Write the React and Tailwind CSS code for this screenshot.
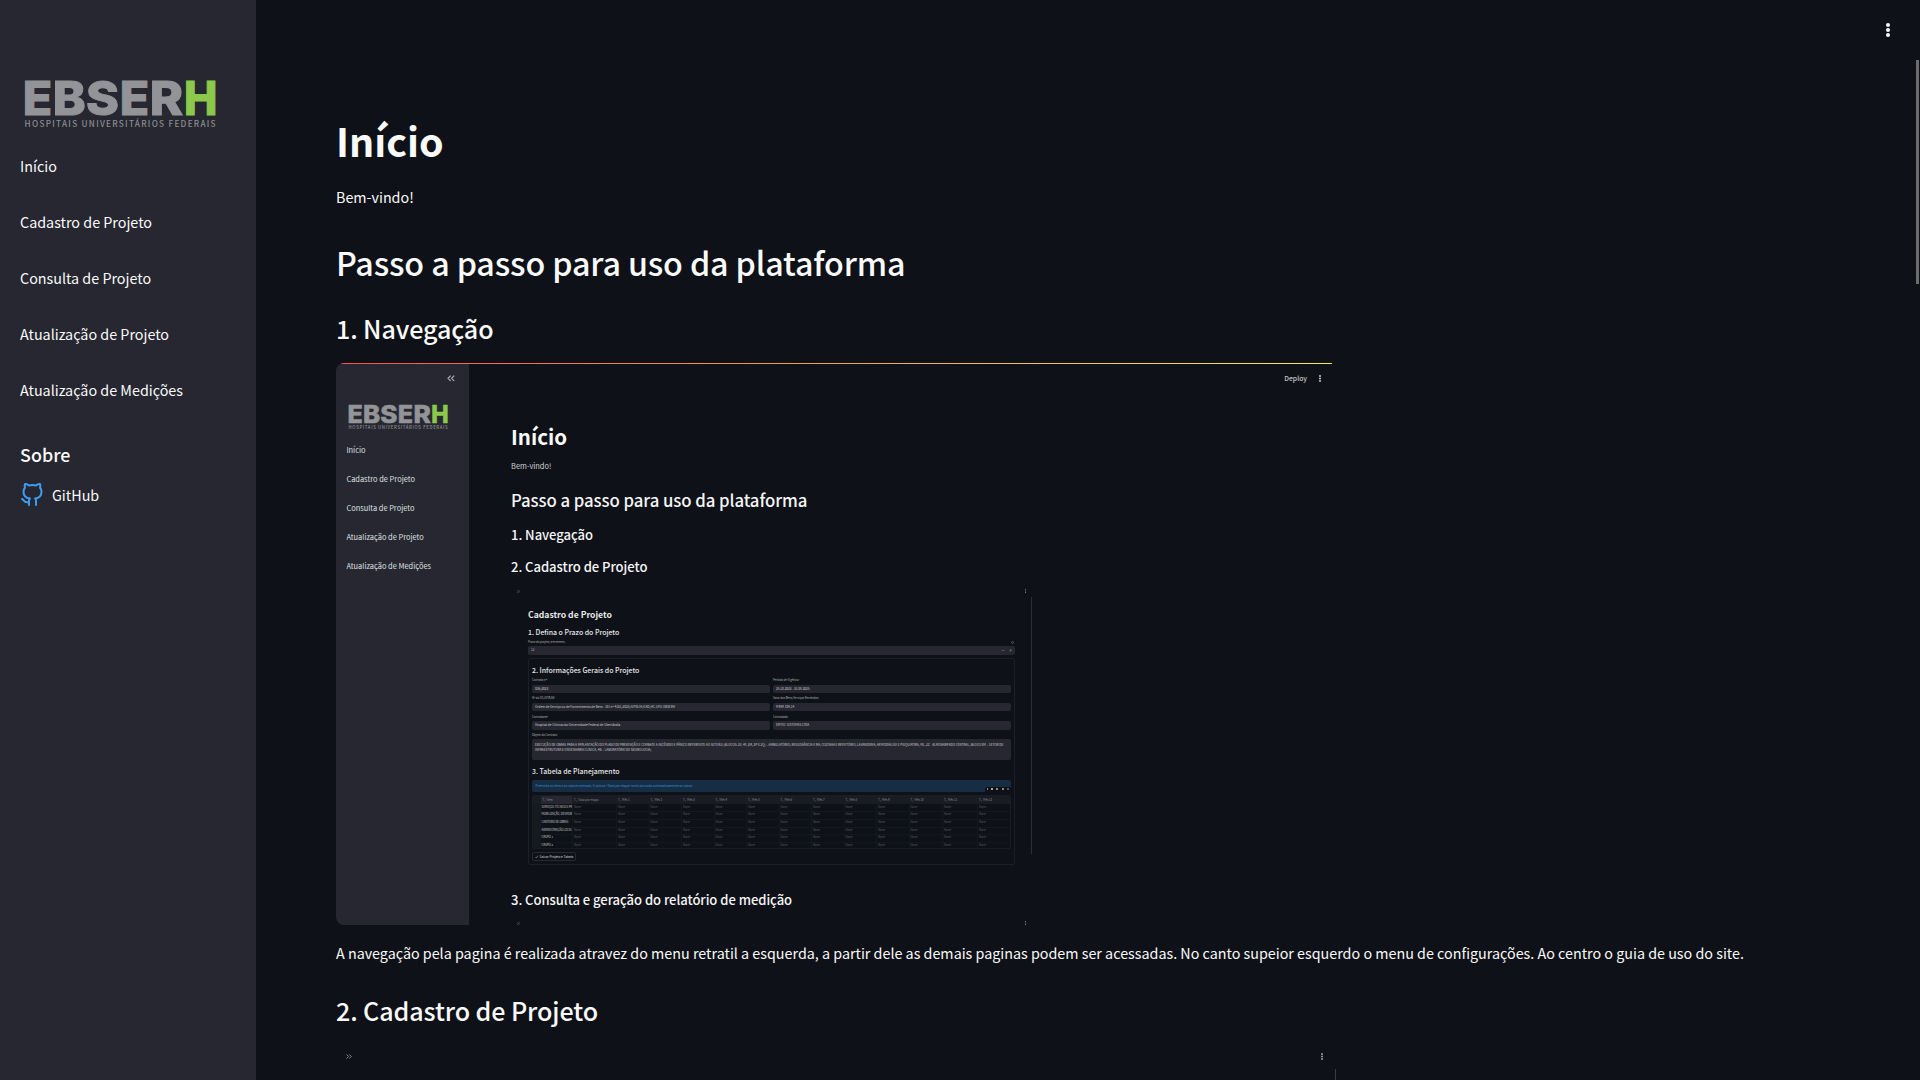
const LETTERS = [
  { ch: "E", x0: 4.7, w: 26 },
  { ch: "B", x0: 34.7, w: 29.6 },
  { ch: "S", x0: 68, w: 29.6 },
  { ch: "E", x0: 101.7, w: 26 },
  { ch: "R", x0: 131.7, w: 30 },
  { ch: "H", x0: 166, w: 30 },
];

const NAV = [
  "Início",
  "Cadastro de Projeto",
  "Consulta de Projeto",
  "Atualização de Projeto",
  "Atualização de Medições",
];

function Logo({ className }) {
  return (
    <svg viewBox="0 0 200 56" className={className} aria-label="EBSERH">
      {LETTERS.map((l, i) => (
        <text
          key={i}
          x={l.x0 - 2}
          y="38.6"
          textLength={l.w + 3.4}
          lengthAdjust="spacingAndGlyphs"
          fontFamily="Inter, sans-serif"
          fontWeight="800"
          fontSize="46.5"
          fill={l.ch === "H" ? "#8cc84b" : "#939498"}
          stroke={l.ch === "H" ? "#8cc84b" : "#939498"}
          strokeWidth="1"
        >
          {l.ch}
        </text>
      ))}
      <text
        x="4.6"
        y="50.8"
        textLength="191"
        lengthAdjust="spacing"
        fontFamily="'Noto Sans CJK JP', sans-serif"
        fontWeight="500"
        fontSize="8.2"
        fill="#8c8d92"
      >
        HOSPITAIS UNIVERSITÁRIOS FEDERAIS
      </text>
    </svg>
  );
}

function Dots({ className }) {
  return (
    <svg viewBox="0 0 4 14" fill="currentColor" className={className}>
      <circle cx="2" cy="2" r="2" />
      <circle cx="2" cy="7" r="2" />
      <circle cx="2" cy="12" r="2" />
    </svg>
  );
}

function Chevrons({ className }) {
  return (
    <svg viewBox="0 0 14 12" fill="none" stroke="currentColor" strokeWidth="2" className={className}>
      <path d="M1 1l5 5-5 5M7.5 1l5 5-5 5" />
    </svg>
  );
}

function Sidebar() {
  return (
    <aside className="w-[256px] shrink-0 bg-[#262730] px-5 pt-[76px]">
      <Logo className="block h-14 w-[200px]" />
      <nav className="mt-[6px] text-[14.33px] leading-[56px]">
        {NAV.map((n) => (
          <div key={n}>{n}</div>
        ))}
      </nav>
      <h3 className="mt-5 text-[17.9px] leading-8 font-medium">Sobre</h3>
      <div className="mt-[11px] flex h-7 items-center gap-2 text-[14.33px] leading-7">
        <svg viewBox="0 0 24 24" className="size-6" fill="none" stroke="#3d9df3" strokeWidth="2" strokeLinecap="round" strokeLinejoin="round">
          <path d="M9 19c-5 1.5-5-2.5-7-3m14 6v-3.87a3.37 3.37 0 0 0-.94-2.61c3.14-.35 6.44-1.54 6.44-7A5.44 5.44 0 0 0 20 4.77 5.07 5.07 0 0 0 19.91 1S18.73.65 16 2.48a13.38 13.38 0 0 0-7 0C6.27.65 5.09 1 5.09 1A5.07 5.07 0 0 0 5 4.77a5.44 5.44 0 0 0-1.5 3.78c0 5.42 3.3 6.61 6.44 7A3.37 3.37 0 0 0 9 18.13V22" />
        </svg>
        <span>GitHub</span>
      </div>
    </aside>
  );
}

function ThumbHeader() {
  return (
    <div className="flex h-4 items-center justify-between pr-[4px] pl-[6px] text-[#8b8c91]">
      <Chevrons className="h-[3px] w-[3.4px]" />
      <Dots className="h-[4px] w-[1.4px]" />
    </div>
  );
}

function Field({ label, value }) {
  return (
    <div className="h-[18.2px]">
      <div className="text-[2.8px] leading-[5px] text-[#b5b6ba]">{label}</div>
      <div className="mt-[1.5px] h-[8.5px] rounded-[2px] bg-[#262730] px-[3px] text-[3.12px] leading-[8.5px] text-[#d3d4d8]">
        {value}
      </div>
    </div>
  );
}

const ROWS = [
  "SERVIÇOS TÉCNICOS PR",
  "MOBILIZAÇÃO, DESMOB",
  "CANTEIRO DE OBRAS",
  "ADMINISTRAÇÃO LOCAL",
  "GRUPO 1",
  "GRUPO 2",
];
const MONTHS = ["Mês 1", "Mês 2", "Mês 3", "Mês 4", "Mês 5", "Mês 6", "Mês 7", "Mês 8", "Mês 9", "Mês 10", "Mês 11", "Mês 12"];
const GRID =
  "grid grid-cols-[7.5px_31.5px_44px_32.5px_32.5px_32.5px_32.5px_32.5px_32.5px_32.5px_32.5px_32.5px_33.5px_35px_1fr]";

function PlanTable() {
  return (
    <div className="mt-[3px] h-[54px] overflow-hidden rounded-[2px] border border-[#1a1c24]">
      <div className={GRID + " h-[8px] bg-[#1a1c24] text-[2.9px] leading-[8px] text-[#8b8c92]"}>
        <span />
        <span className="bg-[#262730] pl-[2px]">T₁ &nbsp;Item</span>
        <span className="pl-[2px]">T₁ &nbsp;Total por etapa</span>
        {MONTHS.map((m) => (
          <span key={m} className="pl-[2px]">T₁ &nbsp;{m}</span>
        ))}
      </div>
      {ROWS.map((r) => (
        <div key={r} className={GRID + " h-[7.6px] text-[2.8px] leading-[7.6px] text-[#5d5f66]"}>
          <span className="bg-[#171920]" />
          <span className="border-b border-[#14171e] pl-px text-[2.75px] text-[#d0d1d4]">{r}</span>
          <span className="border-b border-l border-[#14171e] pl-[1px]">None</span>
          {MONTHS.map((m) => (
            <span key={m} className="border-b border-l border-[#14171e] pl-[1px]">None</span>
          ))}
        </div>
      ))}
    </div>
  );
}

function FormThumb() {
  return (
    <div className="flex h-[291px] w-[521px] whitespace-nowrap">
      <div className="w-[519px]">
        <ThumbHeader />
        <div className="mt-[8.3px] ml-[17px] w-[487px] text-[#e6e7e9]">
          <h1 className="text-[8.65px] leading-[14px] font-bold">Cadastro de Projeto</h1>
          <h2 className="mt-[5.5px] text-[6.95px] leading-[10px] font-medium">1. Defina o Prazo do Projeto</h2>
          <div className="mt-[3.5px] flex items-center justify-between text-[2.8px] leading-[5px] text-[#b5b6ba]">
            <span>Prazo do projeto (em meses)</span>
            <span className="mr-px size-[3px] rounded-full border border-[#55575d]" />
          </div>
          <div className="mt-[1px] flex h-[8.5px] items-center justify-between rounded-[2px] bg-[#262730] px-[3px] text-[3.1px] leading-[8.5px] text-[#b5b6ba]">
            <span>12</span>
            <span className="flex gap-[5px] text-[5px]">
              <span>−</span>
              <span>+</span>
            </span>
          </div>
          <div className="mt-[3px] h-[207px] rounded-[2px] border border-[#1c1f27] px-[3px] pt-[6px]">
            <h2 className="text-[6.95px] leading-[10px] font-medium">2. Informações Gerais do Projeto</h2>
            <div className="mt-[3.5px] grid grid-cols-2 gap-x-[3px]">
              <Field label="Contrato nº:" value="036/2023" />
              <Field label="Período de Vigência:" value="25.10.2023 - 31.08.2025" />
              <Field label="Nº da OS/OFB/NE:" value="Ordem de Serviço ou de Fornecimento de Bens - SEI nº 4131/2023/SIFDLIH/GAD/HC-UFU-EBSERH" />
              <Field label="Valor dos Bens/Serviços Recebidos:" value="9.989.729,14" />
              <Field label="Contratante:" value="Hospital de Clínicas da Universidade Federal de Uberlândia" />
              <Field label="Contratada:" value="EMTEC SISTEMAS LTDA" />
            </div>
            <div className="text-[2.8px] leading-[5px] text-[#b5b6ba]">Objeto do Contrato:</div>
            <div className="mt-[1.5px] h-[20.5px] rounded-[2px] bg-[#262730] px-[3px] pt-[3px] text-[3.12px] leading-[5px] text-[#d3d4d8]">
              EXECUÇÃO DE OBRAS PARA A IMPLANTAÇÃO DO PLANO DE PREVENÇÃO E COMBATE A INCÊNDIO E PÂNICO REFERENTE AO SETOR 2 (BLOCOS: 2V, 4F, 2M, 2P E 2Q) – AMBULATÓRIO, RESSONÂNCIA E RH, COZINHA E REFEITÓRIO, LAVANDERIA, HEMODIÁLISE E PSIQUIATRIA, ML, 2Z - ALMOXARIFADO CENTRAL, BLOCO 8M – SETOR DE
              <br />
              INFRAESTRUTURA E ENGENHARIA CLÍNICA, 4B – LABORATÓRIO DE NEUROLOGIA)
            </div>
            <h2 className="mt-[6px] text-[6.95px] leading-[10px] font-medium">3. Tabela de Planejamento</h2>
            <div className="mt-[4px] flex h-[12px] items-end justify-between rounded-[2px] bg-[#172d43] pl-[3.5px] text-[3.12px] leading-[12px] text-[#3b8fd8]">
              <span>Preencha os itens e os valores mensais. A coluna "Total por etapa" será calculada automaticamente ao salvar.</span>
              <span className="flex h-[5px] w-[26px] items-center justify-around rounded-t-[2px] bg-[#0e1117]">
                <i className="h-[2px] w-px bg-[#88898e]" />
                <i className="h-[2px] w-[2px] bg-[#a5a6aa]" />
                <i className="h-[2px] w-[2px] bg-[#88898e]" />
                <i className="h-[2px] w-[2px] bg-[#88898e]" />
                <i className="h-[2px] w-[2px] bg-[#55575d]" />
              </span>
            </div>
            <PlanTable />
            <div className="mt-[3.6px] flex h-[9px] w-[44px] items-center justify-center gap-[1.5px] rounded-[2px] border border-[#262933] text-[3.2px] leading-[7px] text-[#d9dadd]">
              <svg viewBox="0 0 8 8" className="size-[3.5px] shrink-0" fill="none" stroke="#6fae7c" strokeWidth="1.6">
                <path d="M1 5l2 2 4-6" />
              </svg>
              <span>Salvar Projeto e Tabela</span>
            </div>
          </div>
        </div>
      </div>
      <div className="mt-[14px] ml-px h-[257px] w-px bg-[#2c2e35]" />
    </div>
  );
}

function HomeThumb() {
  return (
    <div className="mt-[18px] h-[562px] w-[998px] overflow-hidden rounded-lg rounded-tr-[3px]">
      <div className="mr-[2px] ml-[5px] h-px bg-linear-to-r from-[#ff4b4b] via-[#f2a54a] to-[#f5ee4e]" />
      <div className="flex h-full">
        <div className="w-[133px] shrink-0 bg-[#262730] px-[10.4px] text-[#dfe0e2]">
          <div className="flex h-[39px] justify-end pt-[11.4px] pr-[4px] text-[#b3b4b8]">
            <Chevrons className="h-[6.6px] w-[8px] rotate-180" />
          </div>
          <Logo className="block h-[29.1px] w-[104px]" />
          <nav className="mt-[3px] text-[7.45px] leading-[29.08px]">
            {NAV.map((n) => (
              <div key={n}>{n}</div>
            ))}
          </nav>
        </div>
        <div className="flex-1 pl-[42px]">
          <div className="flex h-[30px] items-center justify-end gap-[11.5px] pr-[13.5px] text-[#c5c6c9]">
            <span className="-mt-[2px] text-[6.8px] leading-[10px] font-medium">Deploy</span>
            <Dots className="-mt-[1.6px] h-[7px] w-[2px]" />
          </div>
          <h1 className="mt-[28px] text-[20.5px] leading-[28px] font-bold">Início</h1>
          <p className="mt-[9px] text-[7.45px] leading-[14px] text-[#d0d1d4]">Bem-vindo!</p>
          <h2 className="mt-[16px] text-[16.76px] leading-[22px] font-medium tracking-[-0.06px] text-[#f5f5f6]">
            Passo a passo para uso da plataforma
          </h2>
          <h3 className="mt-[14.5px] text-[13.04px] leading-[18px] font-medium tracking-[-0.04px] text-[#f5f5f6]">1. Navegação</h3>
          <h3 className="mt-[14px] text-[13.04px] leading-[18px] font-medium tracking-[-0.04px] text-[#f5f5f6]">2. Cadastro de Projeto</h3>
          <div className="mt-[7.5px]">
            <FormThumb />
          </div>
          <h3 className="mt-[16.5px] text-[13.04px] leading-[18px] font-medium tracking-[-0.04px] text-[#f5f5f6]">
            3. Consulta e geração do relatório de medição
          </h3>
          <div className="mt-[6.5px] w-[519px]">
            <ThumbHeader />
          </div>
        </div>
      </div>
    </div>
  );
}

export default function App() {
  return (
    <div className="flex h-[1080px] w-[1920px] overflow-hidden bg-[#0e1117] font-['Noto_Sans_CJK_JP','Noto_Sans',sans-serif] text-[#fafafa]">
      <Sidebar />
      <main className="flex-1 pl-20">
        <header className="flex h-[60px] items-center justify-end pr-[30px]">
          <Dots className="h-[14px] w-[4px]" />
        </header>
        <div className="flex justify-between">
          <div>
            <h1 className="mt-[54px] text-[39.4px] leading-[52px] font-bold">Início</h1>
            <p className="mt-[18px] text-[14.33px] leading-[26px]">Bem-vindo!</p>
            <h2 className="mt-[30px] text-[32.24px] leading-[44px] font-medium tracking-[-0.14px]">
              Passo a passo para uso da plataforma
            </h2>
            <h3 className="mt-[27px] text-[25.07px] leading-[34px] font-medium tracking-[-0.09px]">1. Navegação</h3>
            <HomeThumb />
            <p className="mt-[15px] text-[14.32px] leading-[26px] whitespace-nowrap">
              A navegação pela pagina é realizada atravez do menu retratil a esquerda, a partir dele as demais paginas podem
              ser acessadas. No canto supeior esquerdo o menu de configurações. Ao centro o guia de uso do site.
            </p>
            <h3 className="mt-[27px] text-[25.07px] leading-[34px] font-medium tracking-[-0.09px]">2. Cadastro de Projeto</h3>
            <div className="mt-[18px] flex h-[60px] w-[1000px] text-[#9b9ca1]">
              <div className="flex h-[23px] w-[998px] items-center justify-between pr-[11px] pl-[10px]">
                <Chevrons className="h-[5px] w-[6px]" />
                <Dots className="h-[7px] w-[2px]" />
              </div>
              <div className="mt-6 ml-px w-px bg-[#3a3b42]" />
            </div>
          </div>
          <div className="mr-px h-[224px] w-[3px] bg-[#6c6c6f]" />
        </div>
      </main>
    </div>
  );
}
